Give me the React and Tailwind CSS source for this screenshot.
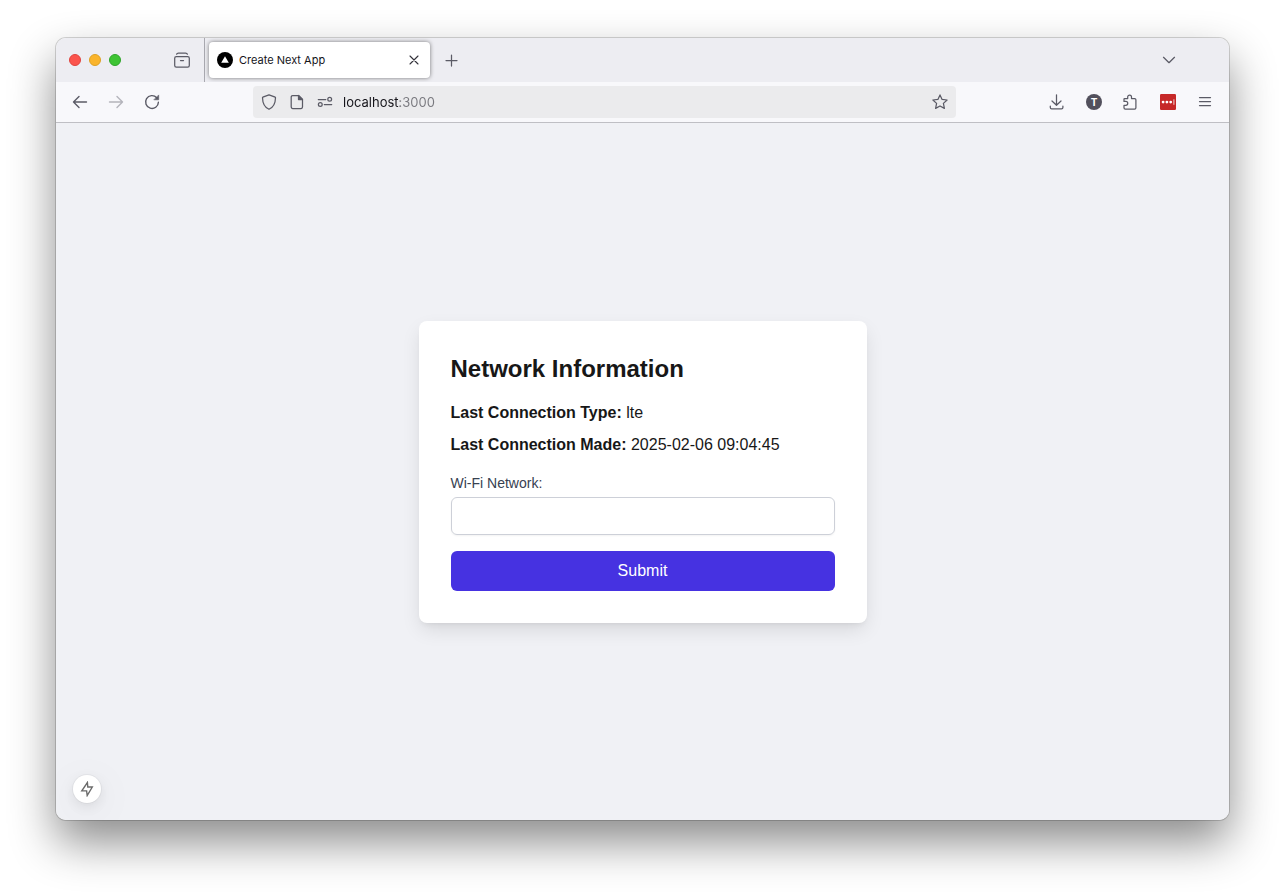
import React from "react";

function Icon({ children, className = "" }) {
  return (
    <svg
      viewBox="0 0 16 16"
      fill="none"
      stroke="currentColor"
      strokeWidth="1.25"
      strokeLinecap="round"
      strokeLinejoin="round"
      aria-hidden="true"
      className={"size-4 shrink-0 " + className}
    >
      {children}
    </svg>
  );
}

function IconButton({ label, className = "", children }) {
  return (
    <button
      type="button"
      aria-label={label}
      className={"flex size-7 shrink-0 items-center justify-center rounded " + className}
    >
      {children}
    </button>
  );
}

function TabStrip() {
  return (
    <div className="flex h-11 items-center bg-[#ededf2]">
      <div className="flex h-full w-[149px] shrink-0 items-center gap-2 border-r border-[#a9a9b0] pl-[13px] pr-2">
        <button type="button" aria-label="Close window" className="size-3 rounded-full border border-[#e0443e] bg-[#fb544d]" />
        <button type="button" aria-label="Minimize window" className="size-3 rounded-full border border-[#dea123] bg-[#fab42c]" />
        <button type="button" aria-label="Zoom window" className="size-3 rounded-full border border-[#2fa52a] bg-[#3ec434]" />
        <IconButton label="Recent browsing" className="ml-auto">
          <Icon className="text-[#5b5b66]">
            <path d="M2.600 2.200Q3 1 4.400 1h7.200q1.400 0 1.800 1.200" />
            <rect x=".7" y="4.700" width="14.600" height="10.400" rx="1.600" />
            <path d="M6.500 8.500h3" />
          </Icon>
        </IconButton>
      </div>
      <div className="ml-1 flex h-9 w-[221px] items-center rounded bg-white pl-2 pr-[2px] shadow-[0_0_4px_rgba(0,0,0,0.5)]">
        <svg viewBox="0 0 16 16" className="size-4 shrink-0" aria-hidden="true">
          <circle cx="8" cy="8" r="8" fill="#000" />
          <path d="M8 4.200 11.800 10.800H4.200z" fill="#fff" />
        </svg>
        <span className="ml-[6px] flex-1 text-[11px] leading-4 text-[#15141a]">Create Next App</span>
        <IconButton label="Close tab">
          <Icon className="text-[#33323b]">
            <path d="M4 4l8 8M12 4l-8 8" strokeWidth="1.1" />
          </Icon>
        </IconButton>
      </div>
      <IconButton label="New tab" className="ml-[7px]">
        <Icon className="text-[#5b5b66]">
          <path d="M8.500 3v11M3 8.500h11" />
        </Icon>
      </IconButton>
      <IconButton label="List all tabs" className="ml-auto mr-[46px]">
        <Icon className="text-[#5b5b66]">
          <path d="M2.500 5.300 8 10.700l5.500-5.400" />
        </Icon>
      </IconButton>
    </div>
  );
}

function Toolbar() {
  return (
    <div className="flex h-[41px] items-center border-b border-[#bfbfc4] bg-[#f8f8fb] text-[#5b5b66]">
      <div className="flex w-[197px] shrink-0 items-center gap-2 pl-[10px]">
        <IconButton label="Go back">
          <Icon>
            <path d="M1.500 8h13M7 2.500 1.500 8 7 13.500" strokeWidth="1.400" />
          </Icon>
        </IconButton>
        <IconButton label="Go forward" className="text-[#b4b4bb]">
          <Icon>
            <path d="M1.500 8h13M9 2.500 14.500 8 9 13.500" strokeWidth="1.400" />
          </Icon>
        </IconButton>
        <IconButton label="Reload">
          <Icon>
            <path d="M12.700 3.700A6.400 6.400 0 1 0 14.400 8.200" strokeWidth="1.400" />
            <path d="M14.700 1.300v4.500h-4.500z" fill="currentColor" strokeWidth=".6" />
          </Icon>
        </IconButton>
      </div>
      <div className="flex h-8 min-w-0 flex-1 items-center rounded bg-[#ebebed] px-2">
        <Icon>
          <path d="M8 .8 14.200 3.200q.3.1.3.500C14.400 9 12.600 13.200 8 15.300 3.400 13.200 1.600 9 1.500 3.700q0-.4.3-.5z" />
        </Icon>
        <Icon className="ml-3">
          <path d="M3.600 1.500h5.900l4 4v7.600q0 1.400-1.400 1.400H3.600q-1.400 0-1.400-1.400V2.900q0-1.400 1.400-1.400z" />
          <path d="M9.500 1.500v4h4z" fill="currentColor" />
        </Icon>
        <Icon className="ml-3">
          <path d="M1.300 5.500h7.500M7.300 10.500h7.400" />
          <circle cx="12.700" cy="5.300" r="1.900" />
          <circle cx="3.300" cy="10.500" r="1.900" />
        </Icon>
        <input
          type="text"
          aria-label="Address"
          defaultValue="localhost:3000"
          className="ml-[10px] min-w-0 flex-1 bg-[linear-gradient(to_right,#15141a_57px,#77777d_57px)] bg-clip-text text-[13px] leading-5 text-transparent outline-none"
        />
        <button type="button" aria-label="Bookmark this page">
          <Icon>
            <path d="M8 .9l2.100 4.500 5 .6-3.700 3.400 1 5L8 12l-4.400 2.400 1-5L.9 6l5-.6z" />
          </Icon>
        </button>
      </div>
      <div className="flex w-[273px] shrink-0 items-center justify-end gap-[9px] pr-[10px]">
        <IconButton label="Downloads">
          <Icon>
            <path d="M7.500.8v10.300M3 7l4.500 4.300L12 7" />
            <path d="M1.300 12v1.500q0 1.400 1.400 1.400h9.800q1.400 0 1.400-1.400V12" />
          </Icon>
        </IconButton>
        <IconButton label="Account">
          <span className="flex size-4 items-center justify-center rounded-full bg-[#52505c] text-[10px] font-bold leading-4 text-white">
            T
          </span>
        </IconButton>
        <IconButton label="Extensions">
          <Icon>
            <path d="M1 7.400V5.100q0-.6.600-.6h3.100V3a1.900 1.900 0 0 1 3.800 0v1.500h3.100q1.300 0 1.300 1.300v8q0 1.300-1.300 1.300H2.300q-1.300 0-1.300-1.300v-2.500h1.800a1.950 1.950 0 0 0 0-3.900z" />
          </Icon>
        </IconButton>
        <IconButton label="Password manager">
          <svg viewBox="0 0 16 16" className="size-4" aria-hidden="true">
            <rect width="16" height="16" rx="1.200" fill="#c62828" />
            <circle cx="3.100" cy="8.100" r="1.400" fill="#fff" />
            <circle cx="6.900" cy="8.100" r="1.400" fill="#fff" />
            <circle cx="10.700" cy="8.100" r="1.400" fill="#fff" />
            <path d="M13.900 5.300v5.500" stroke="#fff" strokeWidth=".8" />
          </svg>
        </IconButton>
        <IconButton label="Open application menu">
          <Icon>
            <path d="M2.500 3.500h11M2.500 7.500h11M2.500 11.500h11" />
          </Icon>
        </IconButton>
      </div>
    </div>
  );
}

function NetworkCard() {
  return (
    <section className="w-full max-w-md rounded-lg bg-white p-8 text-[#171717] shadow-[0_8px_20px_-2px_rgba(0,0,0,0.11),0_4px_6px_-4px_rgba(0,0,0,0.1)]">
      <h1 className="mb-4 text-2xl font-bold">Network Information</h1>
      <p className="mb-2">
        <strong>Last Connection Type:</strong> lte
      </p>
      <p className="mb-4">
        <strong>Last Connection Made:</strong> 2025-02-06 09:04:45
      </p>
      <form onSubmit={(e) => e.preventDefault()}>
        <label htmlFor="wifi" className="block text-sm text-[#374151]">
          Wi-Fi Network:
        </label>
        <input
          id="wifi"
          type="text"
          className="mt-1 block h-[38px] w-full rounded-md border border-[#cdd0d8] px-3 py-2 text-sm shadow-xs"
        />
        <button type="submit" className="mt-4 block w-full rounded-md bg-[#4632e1] px-4 py-2 text-white">
          Submit
        </button>
      </form>
    </section>
  );
}

export default function App() {
  return (
    <div className="flex min-h-screen flex-col bg-white px-14 pt-[38px] pb-[74px] font-['Inter',sans-serif]">
      <div className="flex flex-1 flex-col overflow-hidden rounded-[10px] shadow-[0_0_0_1px_rgba(0,0,0,0.16),0_22px_46px_rgba(0,0,0,0.46)]">
        <TabStrip />
        <Toolbar />
        <main className="relative flex flex-1 items-center justify-center bg-[#f0f1f5] p-4 font-['Liberation_Sans',Arial,sans-serif]">
          <NetworkCard />
          <button
            type="button"
            aria-label="Development indicator"
            className="absolute bottom-[17px] left-[17px] flex size-7 items-center justify-center rounded-full bg-white text-[#6b6b6b] shadow-[0_0_0_1px_rgba(0,0,0,0.04),0_4px_12px_rgba(0,0,0,0.08),0_8px_40px_rgba(0,0,0,0.08)]"
          >
            <svg viewBox="0 0 16 16" className="size-4" fill="none" stroke="currentColor" strokeWidth="1.400" aria-hidden="true">
              <path d="M8.400 1.500 8.800 6h4.500L8.200 14.500 7.600 9.900H2.800z" strokeLinejoin="miter" />
            </svg>
          </button>
        </main>
      </div>
    </div>
  );
}
